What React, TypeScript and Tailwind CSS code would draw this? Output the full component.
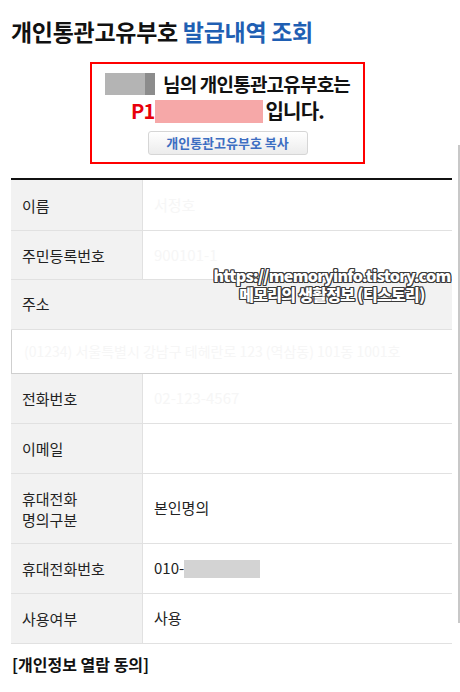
import React from "react";

const font = "font-['Noto_Sans_CJK_KR','Noto_Sans',sans-serif]";

type Row = { label: React.ReactNode; value?: React.ReactNode; h: string };

// Simple label/value row of the lookup table
function InfoRow({ label, value, h }: Row) {
	return (
		<div className={`flex border-b border-[#e1e1e1] ${h}`}>
			<div className="w-[132px] shrink-0 bg-[#f2f2f2] border-r border-[#e1e1e1] flex items-center pl-[11px] text-[15px] leading-[21px] text-[#222]">
				{label}
			</div>
			<div className="flex-1 flex items-center pl-[11px] text-[15px] text-[#222]">{value}</div>
		</div>
	);
}

function Watermark() {
	return (
		<div className="absolute left-[208px] top-[266px] w-[248px] text-center text-white font-black text-[16px] leading-[19px] tracking-[-0.7px] [text-shadow:-1px_-1px_0_#3a3a3a,1px_-1px_0_#3a3a3a,-1px_1px_0_#3a3a3a,1px_1px_0_#3a3a3a,0_1px_0_#3a3a3a,0_-1px_0_#3a3a3a,1px_0_0_#3a3a3a,-1px_0_0_#3a3a3a]">
			<div>https://memoryinfo.tistory.com</div>
			<div>메모리의 생활정보 (티스토리)</div>
		</div>
	);
}

export default function App() {
	const faint = "text-[#f6f6f6]";
	return (
		<div className={`relative w-[460px] h-[692px] bg-white overflow-hidden ${font}`}>
			<h1 className="pt-[17px] pl-[11px] text-[23px] leading-[29px] font-bold tracking-[-0.3px] text-[#111]">
				개인통관고유부호 <span className="text-[#1f5fb3]">발급내역 조회</span>
			</h1>

			{/* result box */}
			<div className="mt-[16px] ml-[90px] w-[275px] h-[102px] border-[2px] border-[#ff0000] flex flex-col items-center pt-[9px]">
				<div className="flex items-center h-[22px] text-[19px] font-bold tracking-[-0.8px] text-[#111]">
					<span className="inline-block w-[40px] h-[22px] bg-[#b4b4b4]" />
					<span className="inline-block w-[10px] h-[22px] bg-[#8c8c8c]" />
					<span className="ml-[8px]">님의 개인통관고유부호는</span>
				</div>
				<div className="flex items-center h-[24px] mt-[4px] text-[20px] font-bold tracking-[-0.8px] text-[#111]">
					<span className="text-[#e8000b]">P1</span>
					<span className="inline-block w-[108px] h-[23px] bg-[#f6a8a8]" />
					<span className="ml-[3px]">입니다.</span>
				</div>
				<button className="mt-[8px] w-[160px] h-[24px] rounded-[3px] border border-[#d6d6d6] bg-gradient-to-b from-white to-[#ececec] text-[13px] font-semibold text-[#3d6ec2] tracking-[0px]">
					개인통관고유부호 복사
				</button>
			</div>

			{/* table */}
			<div className="mt-[14px] ml-[11px] w-[441px] border-t-[2px] border-[#111]">
				<InfoRow label="이름" value={<span className={faint}>서정호</span>} h="h-[51px]" />
				<InfoRow label="주민등록번호" value={<span className={faint}>900101-1</span>} h="h-[49px]" />
				<div className="h-[50px] bg-[#f2f2f2] border-b border-[#e1e1e1] flex items-center pl-[11px] text-[15px] text-[#222]">
					주소
				</div>
				<div className="h-[44px] border-l border-b border-[#cfcfcf] flex items-center pl-[12px] text-[14px] text-[#f6f6f6]">
					(01234) 서울특별시 강남구 테헤란로 123 (역삼동) 101동 1001호
				</div>
				<InfoRow label="전화번호" value={<span className={faint}>02-123-4567</span>} h="h-[50px]" />
				<InfoRow label="이메일" h="h-[50px]" />
				<InfoRow
					label={
						<span>
							휴대전화
							<br />
							명의구분
						</span>
					}
					value="본인명의"
					h="h-[70px]"
				/>
				<InfoRow
					label="휴대전화번호"
					value={
						<span className="flex items-center">
							010-
							<span className="inline-block w-[76px] h-[18px] bg-[#d3d3d3]" />
						</span>
					}
					h="h-[50px]"
				/>
				<InfoRow label="사용여부" value="사용" h="h-[50px]" />
			</div>

			<div className="mt-[8px] pl-[12px] text-[16px] font-bold text-[#111] tracking-[0px]">[개인정보 열람 동의]</div>

			{/* scrollbar edge */}
			<div className="absolute left-[458px] top-[145px] w-[2px] h-[478px] bg-[#c8c8c8]" />
			<Watermark />
		</div>
	);
}
